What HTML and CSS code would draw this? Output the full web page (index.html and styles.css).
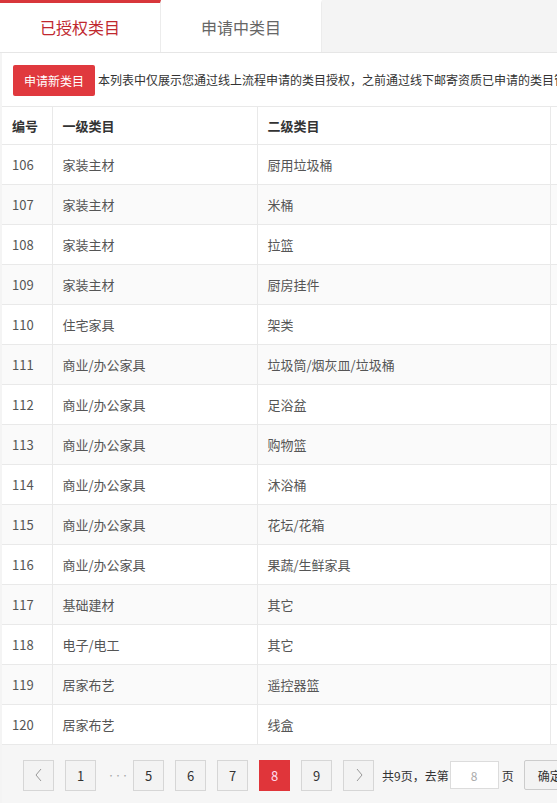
FILE: index.html
```html
<!DOCTYPE html>
<html lang="zh-CN">
<head>
<meta charset="utf-8">
<title>已授权类目</title>
<link rel="stylesheet" href="styles.css">
</head>
<body>
<div class="page">
  <div class="tabs">
    <div class="tab active">已授权类目</div>
    <div class="tab">申请中类目</div>
  </div>
  <div class="panel">
    <div class="toolbar">
      <button class="btn-apply">申请新类目</button>
      <span class="note">本列表中仅展示您通过线上流程申请的类目授权，之前通过线下邮寄资质已申请的类目管理请联系客服</span>
    </div>
    <table class="grid">
      <colgroup>
        <col class="c1"><col class="c2"><col class="c3"><col class="c4">
      </colgroup>
      <thead>
        <tr><th>编号</th><th>一级类目</th><th>二级类目</th><th></th></tr>
      </thead>
      <tbody>
        <tr><td>106</td><td>家装主材</td><td>厨用垃圾桶</td><td></td></tr>
        <tr><td>107</td><td>家装主材</td><td>米桶</td><td></td></tr>
        <tr><td>108</td><td>家装主材</td><td>拉篮</td><td></td></tr>
        <tr><td>109</td><td>家装主材</td><td>厨房挂件</td><td></td></tr>
        <tr><td>110</td><td>住宅家具</td><td>架类</td><td></td></tr>
        <tr><td>111</td><td>商业/办公家具</td><td>垃圾筒/烟灰皿/垃圾桶</td><td></td></tr>
        <tr><td>112</td><td>商业/办公家具</td><td>足浴盆</td><td></td></tr>
        <tr><td>113</td><td>商业/办公家具</td><td>购物篮</td><td></td></tr>
        <tr><td>114</td><td>商业/办公家具</td><td>沐浴桶</td><td></td></tr>
        <tr><td>115</td><td>商业/办公家具</td><td>花坛/花箱</td><td></td></tr>
        <tr><td>116</td><td>商业/办公家具</td><td>果蔬/生鲜家具</td><td></td></tr>
        <tr><td>117</td><td>基础建材</td><td>其它</td><td></td></tr>
        <tr><td>118</td><td>电子/电工</td><td>其它</td><td></td></tr>
        <tr><td>119</td><td>居家布艺</td><td>遥控器篮</td><td></td></tr>
        <tr><td>120</td><td>居家布艺</td><td>线盒</td><td></td></tr>
      </tbody>
    </table>
    <div class="pager">
      <span class="pg arrow"><svg width="10" height="14" viewBox="0 0 10 14"><polyline points="7,1 2,7 7,13" fill="none" stroke="#999" stroke-width="1"/></svg></span>
      <span class="pg">1</span>
      <span class="dots">···</span>
      <span class="pg">5</span>
      <span class="pg">6</span>
      <span class="pg">7</span>
      <span class="pg current">8</span>
      <span class="pg">9</span>
      <span class="pg arrow next"><svg width="10" height="14" viewBox="0 0 10 14"><polyline points="3,1 8,7 3,13" fill="none" stroke="#999" stroke-width="1"/></svg></span>
      <span class="total">共9页，去第</span>
      <input class="goto" type="text" value="8">
      <span class="unit">页</span>
      <button class="ok">确定</button>
    </div>
  </div>
</div>
</body>
</html>
```
FILE: styles.css
```css
html, body {
  margin: 0;
  padding: 0;
  overflow: hidden;
}
body {
  background: #f4f4f4;
  font-family: "Noto Sans CJK SC", "Microsoft YaHei", sans-serif;
  color: #333;
}
.page {
  width: 760px;
}
.tabs {
  display: flex;
  height: 53px;
  border-bottom: 1px solid #e6e6e6;
  box-sizing: border-box;
}
.tab {
  width: 161px;
  height: 52px;
  box-sizing: border-box;
  background: #fff;
  border-right: 1px solid #ececec;
  border-top: 3px solid #fff;
  display: flex;
  align-items: center;
  justify-content: center;
  font-size: 16px;
  color: #666;
  padding-bottom: 2px;
}
.tab.active {
  border-top-color: #d8363b;
  color: #c0282e;
}
.panel {
  margin-left: 2px;
  background: #fff;
}
.toolbar {
  display: flex;
  align-items: center;
  height: 53px;
  padding-left: 11px;
  white-space: nowrap;
  overflow: hidden;
}
.btn-apply {
  height: 31px;
  padding: 0 11px;
  border: none;
  border-radius: 2px;
  background: #e0393e;
  color: #fff;
  font-family: inherit;
  font-size: 12px;
  margin-right: 3px;
  margin-top: 1px;
}
.note {
  font-size: 12px;
  color: #333;
}
.grid {
  border-collapse: collapse;
  table-layout: fixed;
  width: 700px;
  font-size: 13px;
}
.c1 { width: 50px; }
.c2 { width: 205px; }
.c3 { width: 293px; }
.c4 { width: 152px; }
.grid th, .grid td {
  border: 1px solid #e9e9e9;
  text-align: left;
  padding: 0 0 0 10px;
  white-space: nowrap;
}
.grid tr > :first-child { border-left: none; }
.grid th {
  height: 37px;
  font-weight: bold;
  color: #333;
  background: #fff;
}
.grid td {
  height: 39px;
  color: #555;
}
.grid tbody tr:nth-child(even) td {
  background: #fafafa;
}
.pager {
  background: #f6f6f6;
  height: 58px;
  display: flex;
  align-items: center;
  padding-left: 21px;
  padding-top: 2px;
  box-sizing: border-box;
  font-size: 12px;
  white-space: nowrap;
}
.pg {
  width: 31px;
  height: 31px;
  box-sizing: border-box;
  border: 1px solid #d6d6d6;
  background: #f3f3f3;
  display: flex;
  align-items: center;
  justify-content: center;
  color: #333;
  font-size: 13px;
  margin-right: 11px;
}
.pg.current {
  background: #e0353a;
  border-color: #e0353a;
  color: #fde;
}
.dots {
  width: 15px;
  margin-right: 11px;
  text-align: center;
  color: #aaa;
  font-size: 8px;
  letter-spacing: -1px;
}
.arrow svg { display: block; }
.pg.next { margin-right: 8px; }
.total {
  color: #333;
  margin-right: 1px;
}
.goto {
  width: 49px;
  height: 28px;
  box-sizing: border-box;
  border: 1px solid #dcdcdc;
  background: #fff;
  text-align: center;
  color: #aaa;
  font-family: inherit;
  font-size: 12px;
  padding: 0;
  margin: 0 3px 0 0;
}
.unit {
  margin-right: 10px;
  color: #333;
}
.ok {
  height: 30px;
  padding: 0 13px;
  border: 1px solid #ccc;
  border-radius: 2px;
  background: #f3f3f3;
  font-family: inherit;
  font-size: 12px;
  color: #333;
}
```
